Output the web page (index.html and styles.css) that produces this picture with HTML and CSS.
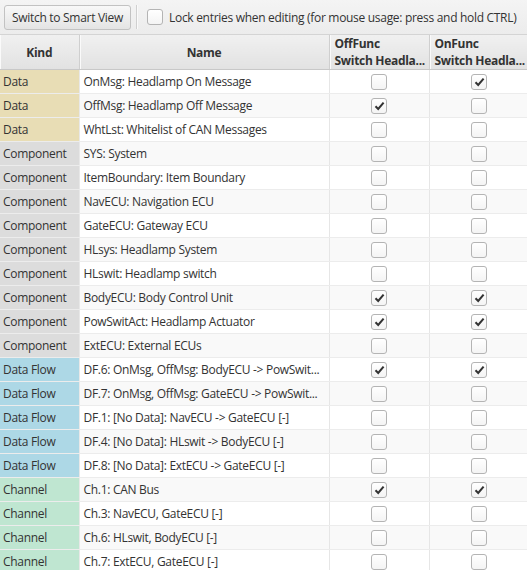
FILE: index.html
```html
<!DOCTYPE html>
<html lang="en">
<head>
    <meta charset="UTF-8">
    <title>Assignment Matrix</title>
    <link rel="stylesheet" href="styles.css">
</head>
<body>
    <div class="toolbar">
        <button class="tool-btn">Switch to Smart View</button>
        <div class="sep"></div>
        <label class="lock">
            <span class="box"></span>
            Lock entries when editing (for mouse usage: press and hold CTRL)
        </label>
    </div>

    <table class="matrix">
        <colgroup>
            <col class="c-kind">
            <col class="c-name">
            <col class="c-func">
            <col class="c-func">
        </colgroup>
        <thead>
            <tr>
                <th class="center">Kind</th>
                <th class="center">Name</th>
                <th>OffFunc<br>Switch Headla...</th>
                <th>OnFunc<br>Switch Headla...</th>
            </tr>
        </thead>
        <tbody id="rows"></tbody>
    </table>

    <script>
        // kind, name, offfunc, onfunc
        const rows = [
            ['data', 'Data', 'OnMsg: Headlamp On Message', 0, 1],
            ['data', 'Data', 'OffMsg: Headlamp Off Message', 1, 0],
            ['data', 'Data', 'WhtLst: Whitelist of CAN Messages', 0, 0],
            ['comp', 'Component', 'SYS: System', 0, 0],
            ['comp', 'Component', 'ItemBoundary: Item Boundary', 0, 0],
            ['comp', 'Component', 'NavECU: Navigation ECU', 0, 0],
            ['comp', 'Component', 'GateECU: Gateway ECU', 0, 0],
            ['comp', 'Component', 'HLsys: Headlamp System', 0, 0],
            ['comp', 'Component', 'HLswit: Headlamp switch', 0, 0],
            ['comp', 'Component', 'BodyECU: Body Control Unit', 1, 1],
            ['comp', 'Component', 'PowSwitAct: Headlamp Actuator', 1, 1],
            ['comp', 'Component', 'ExtECU: External ECUs', 0, 0],
            ['flow', 'Data Flow', 'DF.6: OnMsg, OffMsg: BodyECU -> PowSwit...', 1, 1],
            ['flow', 'Data Flow', 'DF.7: OnMsg, OffMsg: GateECU -> PowSwit...', 0, 0],
            ['flow', 'Data Flow', 'DF.1: [No Data]: NavECU -> GateECU [-]', 0, 0],
            ['flow', 'Data Flow', 'DF.4: [No Data]: HLswit -> BodyECU [-]', 0, 0],
            ['flow', 'Data Flow', 'DF.8: [No Data]: ExtECU -> GateECU [-]', 0, 0],
            ['chan', 'Channel', 'Ch.1: CAN Bus', 1, 1],
            ['chan', 'Channel', 'Ch.3: NavECU, GateECU [-]', 0, 0],
            ['chan', 'Channel', 'Ch.6: HLswit, BodyECU [-]', 0, 0],
            ['chan', 'Channel', 'Ch.7: ExtECU, GateECU [-]', 0, 0]
        ];

        const tick = '<svg width="11" height="10" viewBox="0 0 11 10"><path d="M1.5 5.2 L4.2 8 L9.6 1.6" fill="none" stroke="#333" stroke-width="2"/></svg>';

        function cb(on) {
            return '<td class="chk"><span class="box">' + (on ? tick : '') + '</span></td>';
        }

        let html = '';
        rows.forEach(function (r) {
            html += '<tr><td class="kind ' + r[0] + '">' + r[1] + '</td>'
                + '<td class="name">' + r[2] + '</td>'
                + cb(r[3]) + cb(r[4]) + '</tr>';
        });
        document.getElementById('rows').innerHTML = html;
    </script>
</body>
</html>
```

FILE: styles.css
```css
body {
    margin: 0;
    font-family: "Open Sans", "Noto Sans", sans-serif;
    font-size: 12px;
    letter-spacing: -0.3px;
    color: #333;
    background: #fff;
    overflow: hidden;
}

/* top bar */
.toolbar {
    display: flex;
    align-items: center;
    height: 34px;
    padding: 0 4px;
    background: linear-gradient(#f4f4f4, #ececec);
    border-bottom: 1px solid #d4d4d4;
}

.tool-btn {
    height: 25px;
    width: 127px;
    padding: 0;
    font: inherit;
    letter-spacing: inherit;
    white-space: nowrap;
    color: #333;
    background: linear-gradient(#f8f8f8, #e4e4e4);
    border: 1px solid #c2c2c2;
    border-radius: 3px;
}

.sep {
    width: 1px;
    height: 24px;
    margin: 0 9px 0 5px;
    background: #d0d0d0;
    border-right: 1px solid #fafafa;
}

.lock {
    display: flex;
    align-items: center;
    gap: 6px;
    white-space: nowrap;
}

.box {
    display: inline-flex;
    align-items: center;
    justify-content: center;
    box-sizing: border-box;
    width: 16px; height: 16px;
    border: 1px solid #b4b4b4;
    border-radius: 3px;
    background: linear-gradient(#ffffff, #f4f4f4);
}

/* table */
.matrix {
    width: 527px;
    table-layout: fixed;
    border-collapse: collapse;
}

.c-kind { width: 79px; }
.c-name { width: 250px; }
.c-func { width: 100px; }

.matrix th {
    height: 33px;
    padding: 0 5px;
    text-align: left;
    font-weight: bold;
    line-height: 17px;
    white-space: nowrap;
    overflow: hidden;
    background: linear-gradient(#f0f0f0, #e2e2e2);
    border-right: 1px solid #cfcfcf;
    border-bottom: 1px solid #c8c8c8;
    box-shadow: inset 1px 0 0 #fafafa;
}

.matrix th.center { text-align: center; }

.matrix td {
    height: 23px;
    padding: 0 4px;
    border-right: 1px solid #e6e6e6;
    border-bottom: 1px solid #ececec;
    white-space: nowrap;
    overflow: hidden;
}

.matrix tbody tr:nth-child(even) td { background: #f9f9f9; }

.matrix td.chk { text-align: center; padding: 0; }
.chk .box { vertical-align: middle; }

/* kind colors */
.matrix td.kind { padding-left: 3px; border-right-color: #e8e8e8; }
.matrix tbody tr td.data { background: #e8ddb5; }
.matrix tbody tr td.comp { background: #dcdcdc; }
.matrix tbody tr td.flow { background: #add8e6; }
.matrix tbody tr td.chan { background: #bfe6d1; }
```
